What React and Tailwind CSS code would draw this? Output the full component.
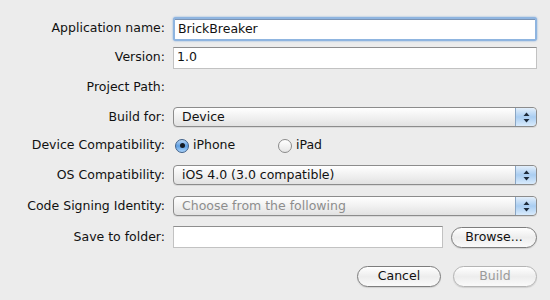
import React from 'react'

const font = { fontFamily: '"DejaVu Sans", "Liberation Sans", sans-serif' }

const Label = ({ children }) => (
  <div className="w-[166px] shrink-0 pr-[1px] text-right text-[12.5px] text-[#111]">{children}</div>
)

const Row = ({ h, label, children }) => (
  <div className={`flex items-center ${h}`}>
    <Label>{label}</Label>
    <div className="ml-[7px] flex flex-1 items-center">{children}</div>
  </div>
)

const Arrows = () => (
  <div className="flex h-full w-[21px] items-center justify-center rounded-r-[4px] border-l border-[#8aa6c4] bg-gradient-to-b from-[#e3effb] via-[#a9cdf1] to-[#d9ebfc]">
    <svg width="7" height="11" viewBox="0 0 7 11">
      <path d="M3.5 0.5 L6.5 4 L0.5 4 Z" fill="#1d2a3a" />
      <path d="M3.5 10.5 L6.5 7 L0.5 7 Z" fill="#1d2a3a" />
    </svg>
  </div>
)

const Popup = ({ value, disabled }) => (
  <div className="flex h-[20px] w-[364px] items-stretch overflow-hidden rounded-[4px] border border-[#8c8c8c] bg-gradient-to-b from-[#ffffff] via-[#f1f1f1] to-[#e2e2e2] shadow-[0_1px_0_rgba(0,0,0,0.08)]">
    <div className={`flex flex-1 items-center pl-[8px] text-[12.5px] ${disabled ? 'text-[#8d8d8d]' : 'text-[#111]'}`}>
      {value}
    </div>
    <Arrows />
  </div>
)

const Radio = ({ checked, label }) => (
  <div className="flex items-center">
    {checked ? (
      <div className="flex h-[14px] w-[14px] items-center justify-center rounded-full border border-[#3e5f88] bg-gradient-to-b from-[#b9d6f3] via-[#5d9ee2] to-[#a9d3fa]">
        <div className="h-[5px] w-[5px] rounded-full bg-[#141a22]" />
      </div>
    ) : (
      <div className="h-[14px] w-[14px] rounded-full border border-[#8a8a8a] bg-gradient-to-b from-[#ffffff] to-[#e6e6e6]" />
    )}
    <span className="ml-[4px] text-[12.5px] text-[#111]">{label}</span>
  </div>
)

const Button = ({ children, disabled, w }) => (
  <div
    className={`flex h-[21px] ${w} items-center justify-center rounded-full border ${disabled ? 'border-[#b4b4b4] text-[#9a9a9a]' : 'border-[#7d7d7d] text-[#111]'} bg-gradient-to-b from-[#ffffff] via-[#ededed] to-[#fafafa] text-[12.5px] shadow-[0_1px_1px_rgba(0,0,0,0.12)]`}
  >
    {children}
  </div>
)

export default function App() {
  return (
    <div className="h-[300px] w-[550px] bg-[#ececec] pt-[14px]" style={font}>
      <Row h="h-[29px]" label="Application name:">
        <div className="rounded-[3px] p-[2px] bg-[#8fb5e0] shadow-[0_0_2px_#7aa6da]">
          <div className="flex h-[20px] w-[360px] items-center border-t border-[#7b93b3] bg-white pl-[3px] text-[12.5px] text-[#111]">
            BrickBreaker
          </div>
        </div>
      </Row>
      <Row h="h-[29px]" label="Version:">
        <div className="flex h-[22px] w-[364px] items-center border border-[#c2c2c2] border-t-[#8e8e8e] bg-white pl-[3px] text-[12.5px] text-[#111]">
          1.0
        </div>
      </Row>
      <Row h="h-[31px]" label="Project Path:" />
      <Row h="h-[28px]" label="Build for:">
        <Popup value="Device" />
      </Row>
      <Row h="h-[29px]" label="Device Compatibility:">
        <div className="flex items-center pl-[2px]">
          <div className="w-[103px]">
            <Radio checked label="iPhone" />
          </div>
          <Radio label="iPad" />
        </div>
      </Row>
      <Row h="h-[30px]" label="OS Compatibility:">
        <Popup value="iOS 4.0 (3.0 compatible)" />
      </Row>
      <Row h="h-[32px]" label="Code Signing Identity:">
        <Popup value="Choose from the following" disabled />
      </Row>
      <Row h="h-[30px]" label="Save to folder:">
        <div className="flex w-[364px] items-center">
          <div className="h-[22px] w-[270px] border border-[#c2c2c2] border-t-[#8e8e8e] bg-white" />
          <div className="ml-auto">
            <Button w="w-[86px]">Browse...</Button>
          </div>
        </div>
      </Row>
      <div className="mt-[14px] flex justify-end gap-[12px] pr-[13px]">
        <Button w="w-[84px]">Cancel</Button>
        <Button w="w-[84px]" disabled>Build</Button>
      </div>
    </div>
  )
}
